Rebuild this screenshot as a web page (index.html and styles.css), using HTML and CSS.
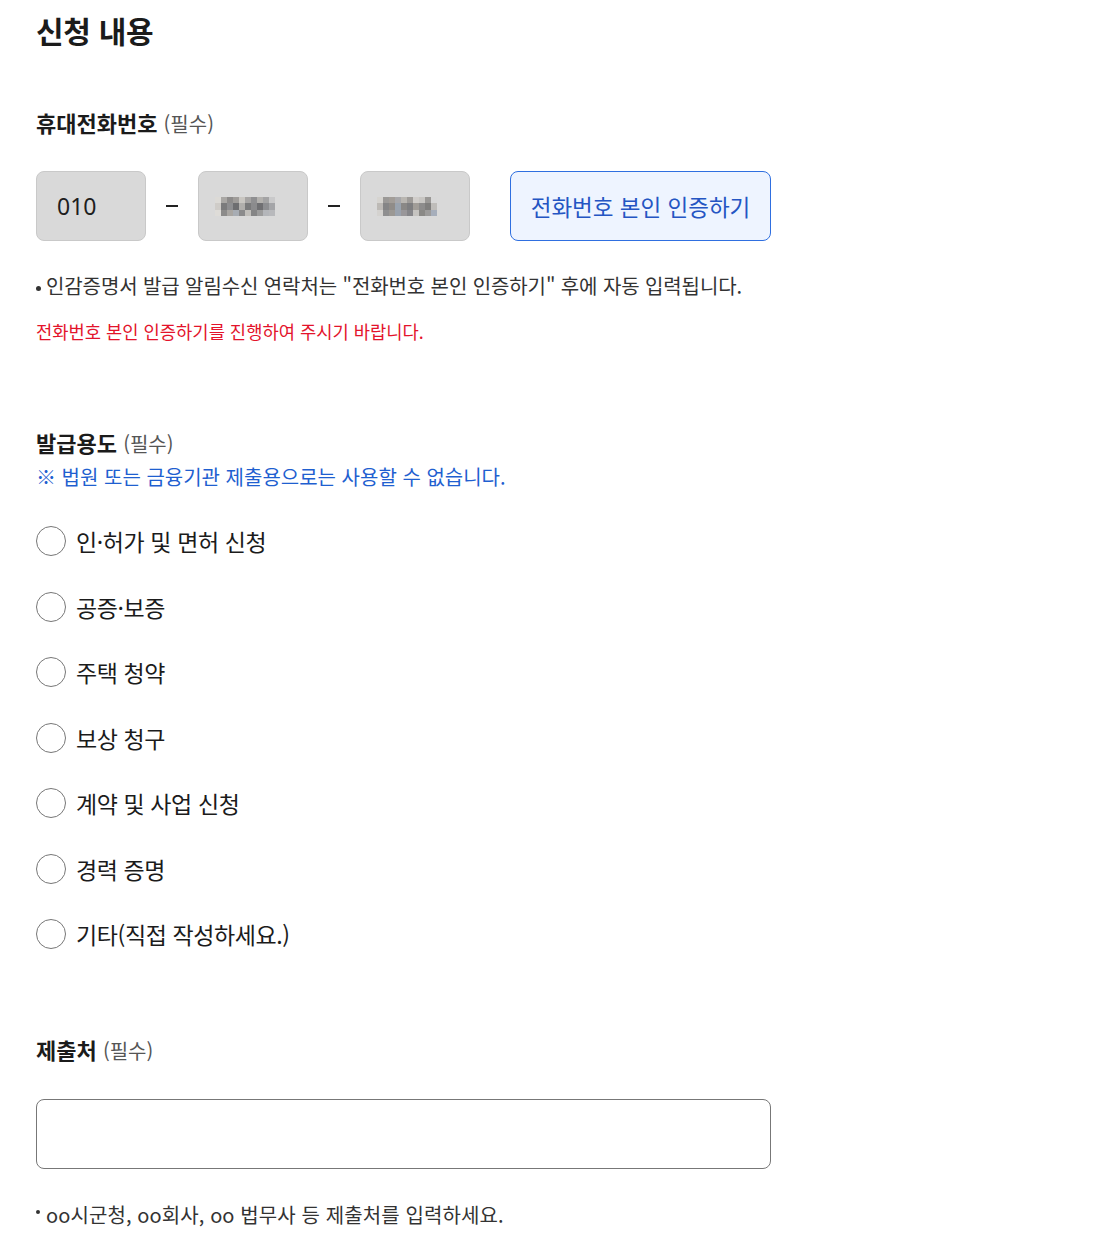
FILE: index.html
```html
<!DOCTYPE html>
<html lang="ko">
<head>
<meta charset="utf-8">
<title>신청 내용</title>
<link rel="stylesheet" href="styles.css">
</head>
<body>
<main class="page">
  <h1 class="title">신청 내용</h1>

  <section class="field phone">
    <h2 class="label">휴대전화번호 <span class="req">(필수)</span></h2>
    <div class="phone-row">
      <div class="box"><span class="num">010</span></div>
      <span class="dash"></span>
      <div class="box">
        <svg class="mosaic" width="60" height="19" viewBox="0 0 60 19">
          <rect x="0" y="0" width="6" height="6" fill="#dcdad6"/><rect x="6" y="0" width="6" height="6" fill="#a9a7a4"/><rect x="12" y="0" width="6" height="6" fill="#8d8b8a"/><rect x="18" y="0" width="6" height="6" fill="#9f9c99"/><rect x="24" y="0" width="6" height="6" fill="#c9c6c1"/><rect x="30" y="0" width="6" height="6" fill="#a6a4a3"/><rect x="36" y="0" width="6" height="6" fill="#8f8f91"/><rect x="42" y="0" width="6" height="6" fill="#b3b1ae"/><rect x="48" y="0" width="6" height="6" fill="#a3a3a4"/><rect x="54" y="0" width="6" height="6" fill="#c9c9ca"/>
          <rect x="0" y="6" width="6" height="7" fill="#cfccc8"/><rect x="6" y="6" width="6" height="7" fill="#7b7b7c"/><rect x="12" y="6" width="6" height="7" fill="#8e8e90"/><rect x="18" y="6" width="6" height="7" fill="#6e6e70"/><rect x="24" y="6" width="6" height="7" fill="#b0aeab"/><rect x="30" y="6" width="6" height="7" fill="#7a7a7b"/><rect x="36" y="6" width="6" height="7" fill="#8b8b8d"/><rect x="42" y="6" width="6" height="7" fill="#6f6f72"/><rect x="48" y="6" width="6" height="7" fill="#8d8e91"/><rect x="54" y="6" width="6" height="7" fill="#a4a5a8"/>
          <rect x="0" y="13" width="6" height="6" fill="#dedcd8"/><rect x="6" y="13" width="6" height="6" fill="#8c8b8a"/><rect x="12" y="13" width="6" height="6" fill="#a9a6a2"/><rect x="18" y="13" width="6" height="6" fill="#a8adb4"/><rect x="24" y="13" width="6" height="6" fill="#8b8b8c"/><rect x="30" y="13" width="6" height="6" fill="#c1bfbb"/><rect x="36" y="13" width="6" height="6" fill="#858586"/><rect x="42" y="13" width="6" height="6" fill="#9c9c9c"/><rect x="48" y="13" width="6" height="6" fill="#b4b6ba"/><rect x="54" y="13" width="6" height="6" fill="#b8b9bc"/>
        </svg>
      </div>
      <span class="dash"></span>
      <div class="box">
        <svg class="mosaic" width="60" height="19" viewBox="0 0 60 19">
          <rect x="0" y="0" width="6" height="6" fill="#d6d4d0"/><rect x="6" y="0" width="6" height="6" fill="#9b9997"/><rect x="12" y="0" width="6" height="6" fill="#a29d98"/><rect x="18" y="0" width="6" height="6" fill="#a7a7aa"/><rect x="24" y="0" width="6" height="6" fill="#b9b6b1"/><rect x="30" y="0" width="6" height="6" fill="#9e9b98"/><rect x="36" y="0" width="6" height="6" fill="#d0cdca"/><rect x="42" y="0" width="6" height="6" fill="#c8c6c3"/><rect x="48" y="0" width="6" height="6" fill="#9a9896"/><rect x="54" y="0" width="6" height="6" fill="#d8d8d8"/>
          <rect x="0" y="6" width="6" height="7" fill="#bdbab6"/><rect x="6" y="6" width="6" height="7" fill="#858586"/><rect x="12" y="6" width="6" height="7" fill="#908c88"/><rect x="18" y="6" width="6" height="7" fill="#9aa3ae"/><rect x="24" y="6" width="6" height="7" fill="#8a8886"/><rect x="30" y="6" width="6" height="7" fill="#7e7e80"/><rect x="36" y="6" width="6" height="7" fill="#a19d98"/><rect x="42" y="6" width="6" height="7" fill="#8d8c8c"/><rect x="48" y="6" width="6" height="7" fill="#7f7e7d"/><rect x="54" y="6" width="6" height="7" fill="#bfbdba"/>
          <rect x="0" y="13" width="6" height="6" fill="#d4d2cf"/><rect x="6" y="13" width="6" height="6" fill="#8f8f90"/><rect x="12" y="13" width="6" height="6" fill="#9b9894"/><rect x="18" y="13" width="6" height="6" fill="#9aa2ad"/><rect x="24" y="13" width="6" height="6" fill="#99979a"/><rect x="30" y="13" width="6" height="6" fill="#86868a"/><rect x="36" y="13" width="6" height="6" fill="#c5c3c0"/><rect x="42" y="13" width="6" height="6" fill="#8a8986"/><rect x="48" y="13" width="6" height="6" fill="#9c9b9a"/><rect x="54" y="13" width="6" height="6" fill="#a6aebb"/>
        </svg>
      </div>
      <button class="verify" type="button">전화번호 본인 인증하기</button>
    </div>
    <p class="note">인감증명서 발급 알림수신 연락처는 "전화번호 본인 인증하기" 후에 자동 입력됩니다.</p>
    <p class="error">전화번호 본인 인증하기를 진행하여 주시기 바랍니다.</p>
  </section>

  <section class="field purpose">
    <h2 class="label">발급용도 <span class="req">(필수)</span></h2>
    <p class="info">※ 법원 또는 금융기관 제출용으로는 사용할 수 없습니다.</p>
    <ul class="radios">
      <li><span class="radio"></span><span class="opt">인·허가 및 면허 신청</span></li>
      <li><span class="radio"></span><span class="opt">공증·보증</span></li>
      <li><span class="radio"></span><span class="opt">주택 청약</span></li>
      <li><span class="radio"></span><span class="opt">보상 청구</span></li>
      <li><span class="radio"></span><span class="opt">계약 및 사업 신청</span></li>
      <li><span class="radio"></span><span class="opt">경력 증명</span></li>
      <li><span class="radio"></span><span class="opt">기타(직접 작성하세요.)</span></li>
    </ul>
  </section>

  <section class="field submit">
    <h2 class="label">제출처 <span class="req">(필수)</span></h2>
    <div class="textbox"></div>
    <p class="note small-bullet">oo시군청, oo회사, oo 법무사 등 제출처를 입력하세요.</p>
  </section>
</main>
</body>
</html>
```

FILE: styles.css
```css
* { box-sizing: border-box; }
html, body { margin: 0; padding: 0; background: #fff; }
body {
  font-family: "Noto Sans CJK KR", "Noto Sans", sans-serif;
  color: #1a1a1a;
}
.page { padding: 0 0 0 36px; width: 1114px; }
.title {
  margin: 0;
  padding-top: 8px;
  font-size: 30px;
  font-weight: 700;
  line-height: 44px;
  color: #1b1b1b;
  letter-spacing: -0.3px;
}
.label {
  margin: 0;
  font-size: 22px;
  font-weight: 700;
  line-height: 30px;
  color: #1b1b1b;
  letter-spacing: 0;
}
.req {
  font-size: 20px;
  font-weight: 400;
  color: #555;
  letter-spacing: 0;
}
.phone { padding-top: 55px; }
.phone-row {
  display: flex;
  align-items: center;
  margin-top: 32px;
  height: 70px;
}
.box {
  width: 110px;
  height: 70px;
  border: 1px solid #c9c9c9;
  border-radius: 8px;
  background: #d9d9d9;
  display: flex;
  align-items: center;
  padding-left: 20px;
}
.num { font-family: "Noto Sans", sans-serif; font-size: 23px; color: #1e1e1e; }
.mosaic { display: block; margin-left: -4px; }
.dash {
  width: 52px;
  display: flex;
  justify-content: center;
}
.dash::before {
  content: "";
  width: 12px;
  height: 2px;
  background: #222;
}
.verify {
  margin-left: 40px;
  width: 261px;
  height: 70px;
  border: 1px solid #2f6fe0;
  border-radius: 8px;
  background: #eef4ff;
  color: #2455c3;
  font-family: inherit;
  font-size: 22.5px;
  letter-spacing: 0;
  padding: 0;
}
.note {
  margin: 30px 0 0;
  font-size: 20px;
  line-height: 30px;
  color: #333;
  letter-spacing: -0.1px;
  position: relative;
  padding-left: 10px;
}
.note::before {
  content: "";
  position: absolute;
  left: 0;
  top: 15px;
  width: 5px;
  height: 5px;
  border-radius: 50%;
  background: #333;
}
.error {
  margin: 18px 0 0;
  font-size: 17.7px;
  line-height: 24px;
  color: #e3132b;
  letter-spacing: 0;
}
.purpose { padding-top: 84px; }
.info {
  margin: 3px 0 0;
  font-size: 20px;
  line-height: 30px;
  color: #1f5fd0;
  letter-spacing: 0;
}
.radios {
  list-style: none;
  margin: 34px 0 0;
  padding: 0;
  display: flex;
  flex-direction: column;
  gap: 35.5px;
}
.radios li {
  display: flex;
  align-items: center;
  height: 30px;
}
.radio {
  width: 30px;
  height: 30px;
  border: 1px solid #777;
  border-radius: 50%;
  background: #fff;
  flex: none;
}
.opt {
  margin-left: 10px;
  font-size: 23px;
  color: #1b1b1b;
  letter-spacing: -0.4px;
}
.submit { padding-top: 85px; }
.textbox {
  margin-top: 33px;
  width: 735px;
  height: 70px;
  border: 1px solid #777;
  border-radius: 8px;
}
.small-bullet { margin-top: 31px; letter-spacing: 0.1px; }
.small-bullet::before { top: 10px; width: 4px; height: 4px; }
```
